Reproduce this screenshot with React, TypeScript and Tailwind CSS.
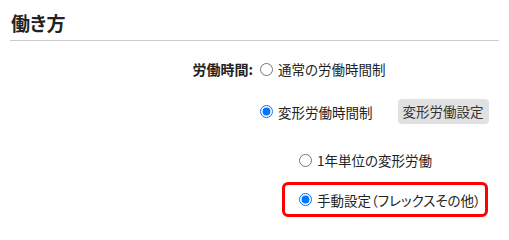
import React from 'react';

const font = { fontFamily: '"Noto Sans CJK JP", "Noto Sans", sans-serif' };

function Radio({ checked, name, label }: { checked?: boolean; name: string; label: string }) {
  return (
    <label className="flex items-center gap-[5px] whitespace-nowrap text-[13.5px] leading-[20px] text-[#222]">
      <input
        type="radio"
        name={name}
        defaultChecked={checked}
        className="m-0 h-[13px] w-[13px]"
      />
      <span>{label}</span>
    </label>
  );
}

export default function App() {
  return (
    <div className="h-[226px] w-[509px] bg-white px-[10px] [font-feature-settings:'palt']" style={font}>
      <h2 className="h-[41px] border-b border-[#cccccc] pl-[1px] pt-[10px] text-[19px] font-bold leading-[26px] text-[#222]">
        働き方
      </h2>

      <div className="mt-[16px] flex">
        {/* Label column */}
        <div className="flex h-[24px] w-[243px] items-center justify-end text-[14px] font-bold text-[#222]">
          労働時間:
        </div>

        {/* Options */}
        <div className="ml-[7px] flex flex-col">
          <div className="flex h-[24px] items-center">
            <Radio name="kind" label="通常の労働時間制" />
          </div>
          <div className="mt-[18px] flex h-[25px] items-center">
            <Radio name="kind" checked label="変形労働時間制" />
            <button className="ml-[25px] h-[25px] rounded-[4px] bg-[#e1e1e1] px-[5px] text-[13.5px] text-[#333]">
              変形労働設定
            </button>
          </div>
          <div className="ml-[39px] mt-[24px] flex h-[24px] items-center">
            <Radio name="sub" label="1年単位の変形労働" />
          </div>
          <div className="ml-[22px] mt-[10px] flex h-[35px] w-[206px] items-center rounded-[6px] border-[3px] border-[#ff0000] pl-[14px]">
            <Radio name="sub" checked label="手動設定（フレックスその他）" />
          </div>
        </div>
      </div>
    </div>
  );
}
